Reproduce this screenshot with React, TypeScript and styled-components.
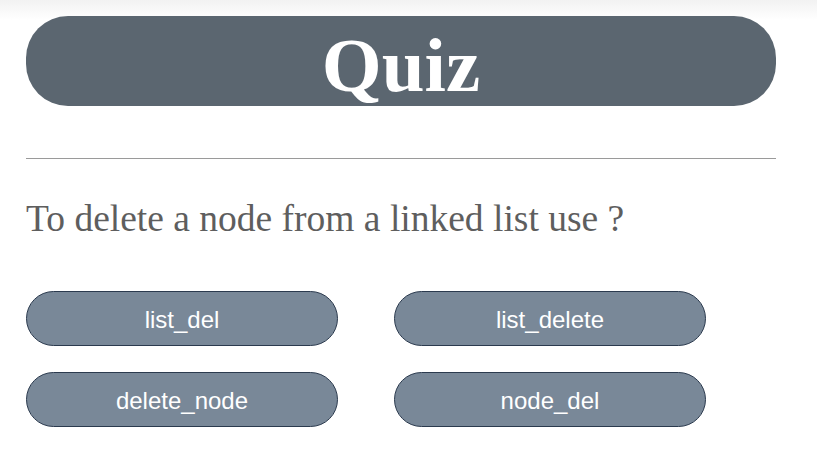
import React from "react";
import styled, { createGlobalStyle } from "styled-components";

const Global = createGlobalStyle`
  html, body {
    margin: 0;
    padding: 0;
    background: linear-gradient(#f2f2f2 0px, #ffffff 20px) no-repeat, #ffffff;
    min-height: 100%;
  }
  body {
    font-family: "Liberation Serif", "Times New Roman", serif;
  }
`;

const Page = styled.main`
  width: 750px;
  padding: 16px 0 0 26px;
  display: flex;
  flex-direction: column;
`;

const Banner = styled.h1`
  margin: 0;
  height: 90px;
  box-sizing: border-box;
  padding-top: 9px;
  border-radius: 42px;
  background: #5b6670;
  color: #ffffff;
  text-align: center;
  font-family: "Liberation Serif", "Times New Roman", serif;
  font-weight: 700;
  font-size: 77px;
  line-height: 81px;
`;

const Divider = styled.hr`
  margin: 52px 0 0;
  border: none;
  border-top: 1px solid #9a9a9a;
  height: 0;
`;

const Question = styled.p`
  margin: 38px 0 0;
  font-family: "Liberation Serif", "Times New Roman", serif;
  font-size: 37.5px;
  line-height: 44px;
  color: #5e5e5e;
`;

const Options = styled.div`
  margin-top: 50px;
  display: grid;
  grid-template-columns: 312px 312px;
  column-gap: 56px;
  row-gap: 26px;
`;

const Option = styled.button`
  height: 55px;
  box-sizing: border-box;
  border: 1px solid #2b3a4e;
  border-radius: 28px;
  background: #798898;
  color: #ffffff;
  font-family: "Liberation Sans", Arial, sans-serif;
  font-size: 24px;
  padding: 2px 0 0;
  cursor: pointer;
`;

const answers = ["list_del", "list_delete", "delete_node", "node_del"];

export default function App() {
  return (
    <>
      <Global />
      <Page>
        <Banner>Quiz</Banner>
        <Divider />
        <Question>To delete a node from a linked list use ?</Question>
        <Options>
          {answers.map((a) => (
            <Option key={a}>{a}</Option>
          ))}
        </Options>
      </Page>
    </>
  );
}
